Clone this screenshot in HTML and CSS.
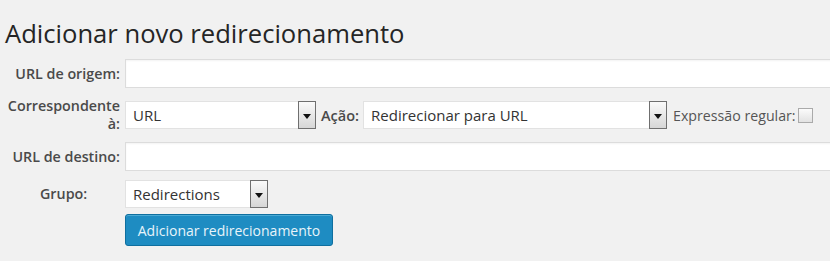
FILE: index.html
```html
<!DOCTYPE html>
<html lang="pt">
<head>
<meta charset="utf-8">
<link rel="stylesheet" href="styles.css">
</head>
<body>
<div class="page">
  <h2 class="title">Adicionar novo redirecionamento</h2>
  <div class="form">
    <label class="lbl">URL de origem:</label>
    <div class="field"><div class="input"></div></div>

    <label class="lbl two"><span class="ln">Correspondente</span><span class="ln">à:</span></label>
    <div class="field row">
      <div class="select w1"><span class="val">URL</span><span class="arrow"></span></div>
      <span class="inl">Ação:</span>
      <div class="select w2"><span class="val">Redirecionar para URL</span><span class="arrow"></span></div>
      <span class="inl light">Expressão regular:</span>
      <span class="check"></span>
    </div>

    <label class="lbl">URL de destino:</label>
    <div class="field"><div class="input"></div></div>

    <label class="lbl grp">Grupo:</label>
    <div class="field"><div class="select w3"><span class="val">Redirections</span><span class="arrow"></span></div></div>

    <span></span>
    <div class="field"><button class="btn">Adicionar redirecionamento</button></div>
  </div>
</div>
</body>
</html>
```

FILE: styles.css
```css
html, body {
  margin: 0;
  padding: 0;
  background: #f1f1f1;
  overflow: hidden;
}
body {
  width: 830px;
  height: 261px;
  font-family: "Open Sans", "Noto Sans", sans-serif;
  color: #333;
}
.page {
  padding: 17px 0 0 0;
}
.title {
  margin: 0 0 0 5px;
  font-weight: 400;
  font-size: 25.6px;
  line-height: 34px;
  color: #252525;
}
.form {
  margin-top: 8px;
  display: grid;
  grid-template-columns: 120px 1fr;
  column-gap: 5px;
  row-gap: 9px;
  align-items: center;
}
.lbl {
  text-align: right;
  font-size: 14.3px;
  font-weight: 600;
  color: #4a4a4a;
  line-height: 18px;
}
.lbl .ln {
  display: block;
}
.lbl.grp {
  text-align: left;
  padding-left: 40px;
}
.field {
  min-width: 0;
}
.input {
  height: 27px;
  width: 740px;
  background: #fff;
  border: 1px solid #dcdcdc;
  box-shadow: inset 0 1px 2px rgba(0,0,0,0.05);
}
.row {
  display: flex;
  align-items: center;
}
.select {
  display: flex;
  align-items: stretch;
  height: 28px;
  background: #fff;
  border: 1px solid #e2e2e2;
  border-right: none;
  box-sizing: border-box;
}
.select .val {
  flex: 1;
  display: flex;
  align-items: center;
  padding-left: 7px;
  font-size: 15px;
  color: #333;
}
.select .arrow {
  width: 16px;
  border: 1px solid #6f6f6f;
  margin: -1px 0;
  background: linear-gradient(#fafafa, #d6d6d6);
  position: relative;
}
.select .arrow::after {
  content: "";
  position: absolute;
  left: 4px;
  top: 12px;
  border-left: 4px solid transparent;
  border-right: 4px solid transparent;
  border-top: 5px solid #111;
}
.w1 { width: 191px; }
.w2 { width: 304px; }
.w3 { width: 143px; }
.inl {
  font-size: 14.5px;
  font-weight: 600;
  color: #4a4a4a;
  margin: 0 4px 0 5px;
}
.inl.light {
  font-size: 14.2px;
  font-weight: 400;
  color: #555;
  margin: 0 2px 0 6px;
}
.check {
  width: 13px;
  height: 13px;
  border: 1px solid #aaa;
  background: linear-gradient(#fbfbfb, #e2e2e2);
}
.btn {
  display: block;
  margin-top: -3px;
  width: 208px;
  height: 32px;
  background: #1e8cc2;
  border: 1px solid #0f6f9f;
  border-radius: 3px;
  color: #e8f4fa;
  font-family: "Open Sans", "Noto Sans", sans-serif;
  font-size: 14px;
  padding: 0;
  box-shadow: inset 0 1px 0 rgba(120,200,230,0.5);
}
```
